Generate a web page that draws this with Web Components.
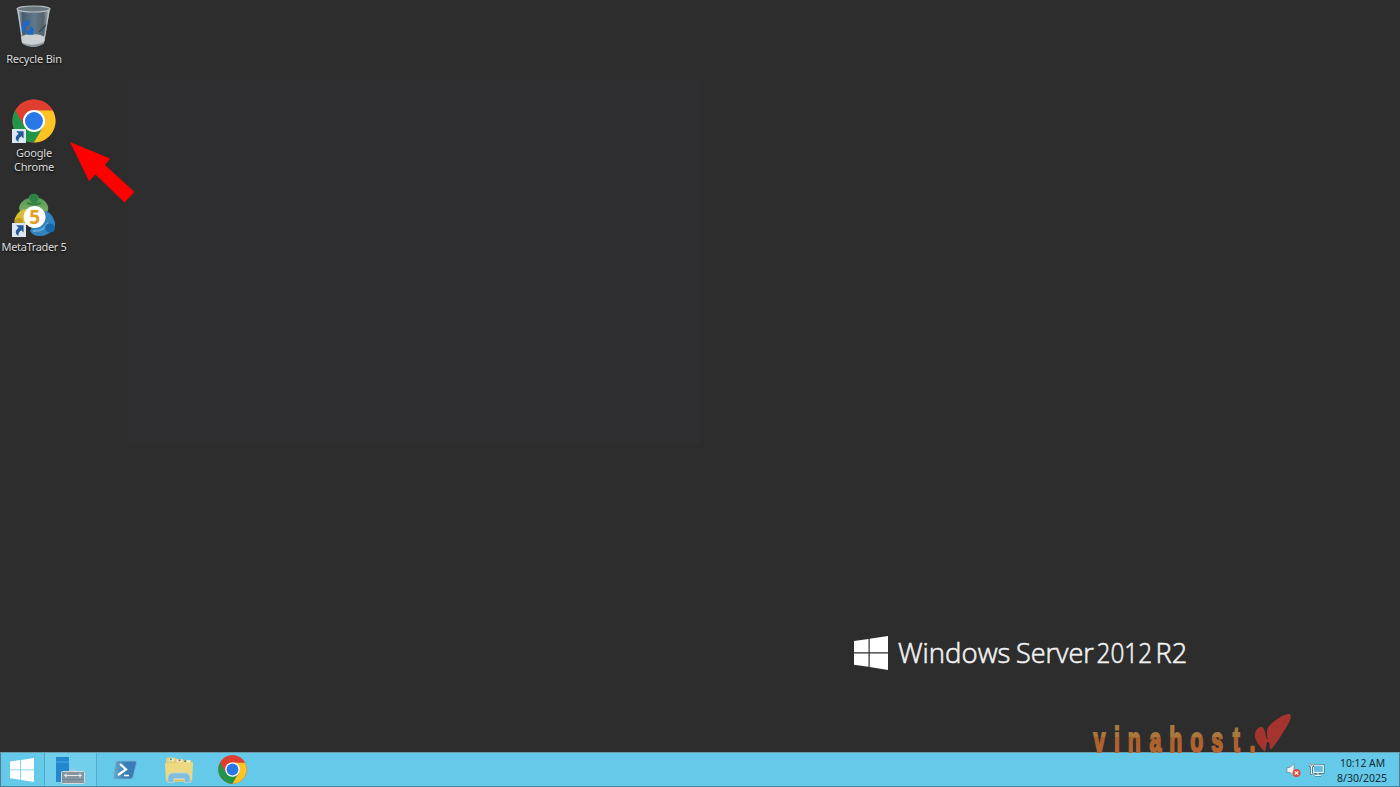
<!DOCTYPE html>
<html lang="en">
<head>
<meta charset="utf-8">
<title>Windows Server desktop</title>
<style>
html,body{margin:0;height:100%;overflow:hidden;background:#2d2d2d}
body{font-family:"Noto Sans","Open Sans",sans-serif}
</style>
</head>
<body>
<server-desktop></server-desktop>
<script>
const define = (name, html) => {
  const t = document.createElement('template');
  t.innerHTML = html;
  customElements.define(name, class extends HTMLElement {
    constructor(){ super(); this.attachShadow({mode:'open'}).append(t.content.cloneNode(true)); }
  });
};
const base = '<style>:host{display:block;flex:none}svg{display:block;width:100%;height:100%;overflow:visible}</style>';

define('chrome-icon', base + `
<svg viewBox="0 0 48 48">
<circle cx="24" cy="24" r="23.5" fill="#df3e31"/>
<path d="M3.65 12.25A23.5 23.5 0 0 0 24 47.5L34.2 29.9L13.8 29.9Z" fill="#229648"/>
<path d="M44.35 12.25A23.5 23.5 0 0 1 24 47.5L34.2 29.9L24 12.25Z" fill="#fcc425"/>
<path d="M3.65 12.25A23.5 23.5 0 0 1 44.35 12.25L24 12.25L13.8 29.9Z" fill="#df3e31"/>
<circle cx="24" cy="24" r="12" fill="#fff"/><circle cx="24" cy="24" r="9.8" fill="#2878e6"/>
</svg>`);

define('shortcut-badge', base + `
<svg viewBox="0 0 14 14"><rect width="14" height="14" fill="#dce7ef"/><path d="M4.2 2.2H11.6V9.5L9.3 7.3C6.8 9 6.2 10.8 6.5 13C2.5 10.6 3.3 7 6.6 4.7Z" fill="#245a9c"/></svg>`);

define('recycle-bin-icon', base + `
<svg viewBox="0 0 36 44">
<defs><linearGradient id="g" x1="0" x2="1"><stop stop-color="#b4c0c8"/><stop offset=".17" stop-color="#465d6e"/><stop offset=".52" stop-color="#637788"/><stop offset=".8" stop-color="#54646d"/><stop offset="1" stop-color="#bac0c3"/></linearGradient></defs>
<path d="M1 4L6 38Q18 46 28 38L34 4Z" fill="url(#g)"/>
<path d="M5 32Q10 28 16 30Q22 28 29 32L28 38Q18 45 6 38Z" fill="#cbd0d0"/>
<path d="M7 38Q17 42 28 37L27.5 39Q17 45 6.5 39Z" fill="#8d989e"/>
<path d="M10 15L14 16L13 20L9 21L10 27L6 26L6 20ZM14 21L18 24L17 29L12 30L10 27L14 25Z" fill="#1d68cd"/>
<path d="M23 27L31 19" stroke="#354653" stroke-width="1.5"/>
<path d="M2 5L6.5 35M33 5L28 36" stroke="#bdc7cd" stroke-width="1.1" fill="none"/>
<ellipse cx="17.5" cy="4" rx="16.5" ry="3" fill="#68767e" stroke="#b9c0c3" stroke-width="1.2"/>
</svg>`);

define('metatrader-icon', base + `
<svg viewBox="0 0 44 44">
<defs><linearGradient id="a" y2="1" x2="0"><stop stop-color="#4d9655"/><stop offset="1" stop-color="#78b064"/></linearGradient></defs>
<path d="M9 19Q5 16 9 10Q12 6 17 5Q17 1 22 1Q26 1 27 5Q32 6 35 11Q38 17 34 20Z" fill="url(#a)"/>
<ellipse cx="22" cy="5.6" rx="4.5" ry="4.8" fill="#2c8442"/><path d="M15 10Q22 13 29 10" stroke="#367d40" stroke-width="2" fill="none"/>
<path d="M14 16Q6 17 3 25Q1 30 5 32H18V17Z" fill="#d9bd34"/><circle cx="7" cy="29" r="4" fill="#c19a21"/>
<path d="M31 18Q39 18 42 27Q45 33 40 37Q36 43 27 43Q21 43 18 38L23 28Z" fill="#3383c1"/><path d="M21 38Q31 39 36 30" fill="none" stroke="#62a6d4" stroke-width="2"/><ellipse cx="38" cy="35" rx="5" ry="4.5" fill="#1967ab"/>
<circle cx="22.6" cy="24" r="10.9" fill="#fff"/>
<text x="22.6" y="31" text-anchor="middle" font-family="Open Sans" font-weight="700" font-size="19" fill="#e59d22">5</text>
</svg>`);

define('desktop-item', `
<style>
:host{display:flex;flex-direction:column;align-items:center;width:68px;height:94px;flex:none;color:#dedede;font:11px/14px "Noto Sans",sans-serif;text-align:center}
.pic{position:relative;width:44px;height:44px;display:flex;justify-content:center}
.label{margin-top:3px;white-space:nowrap;letter-spacing:var(--track,0);text-shadow:0 1px 2px #000}
::slotted([slot=badge]){position:absolute;left:0;bottom:0;width:14px;height:14px}
</style><div class="pic"><slot name="icon"></slot><slot name="badge"></slot></div><div class="label"><slot></slot></div>`);

define('red-pointer', base + `<svg viewBox="0 0 66 62"><path d="M0 0L40 16.5L35 23L64.5 50L54.5 60.5L25.5 32.5L19 39Z" fill="#fe0000"/></svg>`);

define('windows-flag', base + `<svg viewBox="0 0 34 34"><path d="M0 5L14.5 3V16.3H0ZM15.7 2.8L34 0V16.3H15.7ZM0 17.5H14.5V30.8L0 28.8ZM15.7 17.5H34V34L15.7 31Z" fill="#fff"/></svg>`);

define('server-brand', `
<style>:host{display:flex;align-items:flex-start;gap:9px}windows-flag{width:34px;height:34px}svg{width:292px;height:36px;overflow:visible}text{font:300 28px "Open Sans",sans-serif;fill:#f2f2f2;stroke:#f2f2f2;stroke-width:.6}</style>
<windows-flag></windows-flag><svg><g transform="translate(1 27) scale(.985 1)"><text>Windows</text></g><g transform="translate(119 27) scale(.965 1)"><text>Server</text></g><g transform="translate(199.5 27) scale(.87 1)"><text>2012</text></g><g transform="translate(258.5 27) scale(.97 1)"><text>R2</text></g></svg>`);

define('vinahost-mark', base + `
<svg viewBox="0 0 200 42">
<defs><linearGradient id="v" gradientUnits="userSpaceOnUse" x1="0" y1="-30" x2="0" y2="0"><stop stop-color="#a9783e"/><stop offset=".5" stop-color="#a9783e"/><stop offset=".51" stop-color="#ad602c"/><stop offset="1" stop-color="#b36431"/></linearGradient></defs>
<g transform="translate(0 38.8) scale(.6 1)" font-family="Liberation Sans" font-weight="700" font-size="35.5" fill="url(#v)" stroke="url(#v)" stroke-width="2"><text x="1 35 58 94 127 162 197 233 261" y="0">vinahost.</text></g>
<path d="M172 38.8C167 34 161.5 27 162 22C162 17 166 13.5 169 14C171.5 14.5 172.5 21 173.5 25.5L175 27C173.5 21 173 16 177 12C183 6 192 0 197 1C199 4 197 8 194 13C190 20 183 31 178.5 36Q176.5 37 176.5 30L175 29L174 29Z" fill="#a5342f"/>
</svg>`);

define('server-manager-icon', base + `
<svg viewBox="0 0 30 28"><rect x="0" y="0" width="13" height="25" fill="#2488d1"/><path d="M0 5H13" stroke="#51a9e2"/><path d="M13 14Q16 11 20 14" stroke="#c0c5c5" fill="none"/><rect x="5.5" y="14.5" width="23" height="12" rx="1" fill="#8795a0" stroke="#d4dadc"/><path d="M8 18.5H26M10 16.5V20.5M24 16.5V20.5" stroke="#e5e9eb" stroke-width="1.2"/><path d="M6 22.5H28" stroke="#738693"/></svg>`);
define('powershell-icon', base + `
<svg viewBox="0 0 24 20"><defs><linearGradient id="p"><stop stop-color="#68a8cc"/><stop offset=".5" stop-color="#3b82b4"/><stop offset="1" stop-color="#3976bb"/></linearGradient></defs><path d="M4 1H22Q24 1 23.5 3L20 17Q19.5 19 17.5 19H1.5Q0 19 .4 17L2.6 3Q3 1 4 1Z" fill="url(#p)" stroke="#78b8d9" stroke-width=".8"/><path d="M7 4L13 9.5L5 15" fill="none" stroke="#fff" stroke-width="2.2"/><path d="M11 15.5H16" stroke="#fff" stroke-width="1.6"/></svg>`);
define('folder-icon', base + `
<svg viewBox="0 0 30 28"><path d="M1 4L2 1L10 1L12 3L27 4L28 26H1Z" fill="#e5ce77"/><path d="M4 2H9V5H4ZM12 3H18V6H12ZM21 4H26V7H21Z" fill="#f4f0d8"/><path d="M5 3H7M20 5H22" stroke="#2f9a64" stroke-width="2"/><path d="M14 4H16" stroke="#c85942" stroke-width="2"/><path d="M0 7H13L15 6H29L28 26H1Z" fill="#eed983"/><path d="M1 25H28" stroke="#d8b653"/><path d="M3 27V23Q3 17 9 17H20Q26 17 26 23V27H20V23H9V27Z" fill="#81bddd" stroke="#b6dceb" stroke-width=".8"/></svg>`);
define('volume-icon', base + `
<svg viewBox="0 0 15 17"><path d="M1 5.5H4L8 1.5V14L4 10.5H1Z" fill="#f2f5f6" stroke="#738b95" stroke-width=".8"/><circle cx="10.5" cy="11" r="4" fill="#df4d40"/><path d="M8.8 9.3L12.2 12.7M12.2 9.3L8.8 12.7" stroke="#fff" stroke-width="1.2"/></svg>`);
define('network-icon', base + `
<svg viewBox="0 0 15 15"><rect x="4.3" y="3.2" width="10" height="7.2" fill="#63c7e7" stroke="#3b6577" stroke-width="2.4"/><rect x="4.3" y="3.2" width="10" height="7.2" fill="#62bfdc" stroke="#eff8fa" stroke-width="1.1"/><path d="M9 11V13M6 13.4H12" stroke="#3b6577" stroke-width="2.4"/><path d="M9 11V13M6 13.4H12" stroke="#edf6fa" stroke-width="1.1"/><path d="M1 1V4H4V1M2.5 4V12H5" fill="none" stroke="#446778" stroke-width="2.1"/><path d="M1 1V4H4V1M2.5 4V12H5" fill="none" stroke="#edf6fa" stroke-width="1"/></svg>`);

define('task-bar', `
<style>
:host{display:flex;box-sizing:border-box;height:35px;flex:none;background:#65c9e9;border-top:1px solid #6e9bab;border-left:1px solid #557986;border-right:1px solid #557986;border-bottom:1px solid #47899d}
.start,.app{display:flex;align-items:center;justify-content:center;flex:none}
.start{width:43px}.start windows-flag{width:24px;height:24px;margin-right:2px}
.app{width:54px}.manager{width:53px;box-sizing:border-box;border-left:1px solid #52a8c6;border-right:1px solid #55abc8;background:#72cfeb}
server-manager-icon{width:30px;height:28px;margin:2px 0 0 1px}powershell-icon{width:24px;height:20px;margin-left:1px}folder-icon{width:29px;height:28px;margin-left:2px}chrome-icon{width:29px;height:29px;margin-left:1px}
.tray{margin-left:auto;display:flex;align-items:center;gap:8px}volume-icon{width:15px;height:17px;margin-top:1px}network-icon{width:15px;height:15px;margin:0 4px 1px 0}
.clock{width:63px;height:33px;padding-right:4px;box-sizing:border-box}
.clock svg{width:100%;height:100%;overflow:visible}.clock text{font:10.5px "Noto Sans",sans-serif;fill:#102c36}
</style>
<div class="start"><windows-flag></windows-flag></div><div class="app manager"><server-manager-icon></server-manager-icon></div><div class="app"><powershell-icon></powershell-icon></div><div class="app"><folder-icon></folder-icon></div><div class="app"><chrome-icon></chrome-icon></div>
<div class="tray"><volume-icon></volume-icon><network-icon></network-icon><div class="clock"><svg><text x="4" y="13.5" textLength="45" lengthAdjust="spacingAndGlyphs">10:12 AM</text><text x="1" y="28.5" textLength="50" lengthAdjust="spacingAndGlyphs">8/30/2025</text></svg></div></div>`);

define('server-desktop', `
<style>
:host{display:flex;flex-direction:column;width:100vw;height:100vh;background:#2d2d2d;position:relative}
.desk{flex:1;min-height:0;display:flex;flex-direction:column;align-items:flex-start;padding-top:5px;box-sizing:border-box;background:linear-gradient(#2f2f31,#2f2f31) 128px 80px/572px 363px no-repeat}
recycle-bin-icon{width:36px;height:44px}chrome-icon,metatrader-icon{width:44px;height:44px}
red-pointer{position:absolute;left:70px;top:142px;width:66px;height:62px}
server-brand{position:absolute;left:854px;top:636px}
vinahost-mark{position:absolute;left:1093px;top:713px;width:200px;height:42px}
</style>
<div class="desk">
<desktop-item style="--track:-.2px"><recycle-bin-icon slot="icon"></recycle-bin-icon>Recycle Bin</desktop-item>
<desktop-item style="--track:-.2px"><chrome-icon slot="icon"></chrome-icon><shortcut-badge slot="badge"></shortcut-badge>Google<br>Chrome</desktop-item>
<desktop-item style="--track:-.35px"><metatrader-icon slot="icon"></metatrader-icon><shortcut-badge slot="badge"></shortcut-badge>MetaTrader 5</desktop-item>
</div>
<task-bar></task-bar><server-brand></server-brand><vinahost-mark></vinahost-mark><red-pointer></red-pointer>`);
</script>
</body>
</html>
